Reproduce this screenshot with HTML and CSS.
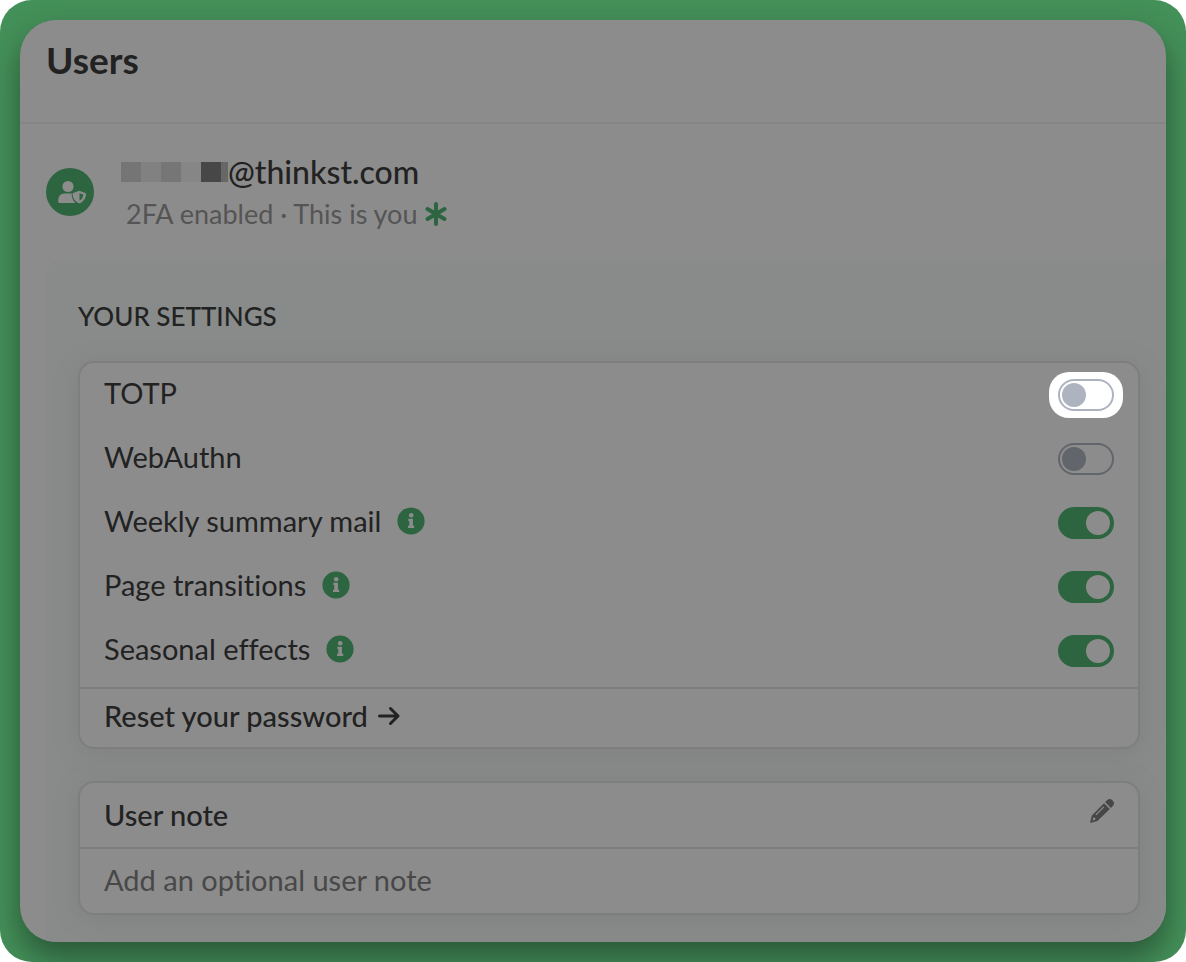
FILE: index.html
```html
<!DOCTYPE html>
<html lang="en">
<head>
<meta charset="utf-8">
<meta name="viewport" content="width=device-width, initial-scale=1">
<title>Users</title>
<link rel="stylesheet" href="styles.css">
</head>
<body>
<svg class="symbols" aria-hidden="true">
  <symbol id="info" viewBox="0 0 28 28">
    <circle cx="14" cy="14" r="13.6" fill="currentColor"/>
    <g class="cutout"><circle cx="14.200" cy="8.200" r="2.300"/><path d="M11.300 11.700h4.600v7h1.300v2.400h-6.200v-2.400h1.300v-4.600h-1z"/></g>
  </symbol>
</svg>
<div class="frame">
  <main class="window">
    <header class="topbar"><h1>Users</h1></header>
    <div class="content">
      <section class="profile">
        <svg class="avatar" viewBox="0 0 48 48" aria-hidden="true">
          <circle class="disc" cx="24" cy="24" r="24"/>
          <circle class="cutout" cx="22" cy="18.500" r="5.600"/>
          <path class="cutout" d="M12.200 33.500c0-5 2.300-7.900 6.200-7.900h7.400c-.4 3.700 1 6.800 3.500 9.400H13.500c-.8 0-1.300-.6-1.300-1.500z"/>
          <path class="cutout" d="M33.300 22.800l6 2.200c.5.200.7.600.7 1-.1 4-2.200 7.500-6 9.200-.5.200-.9.200-1.400 0-3.800-1.700-5.900-5.200-6-9.200 0-.4.200-.8.700-1z"/>
          <path class="disc" d="M33.500 25.200l3.800 1.400c-.2 2.700-1.500 4.900-3.800 6.200z"/>
        </svg>
        <div class="identity">
          <p class="email"><svg class="mosaic" viewBox="0 0 107 20" aria-hidden="true"><path fill="#757575" d="M0 0h20v20H0z"/><path fill="#818181" d="M20 0h20v20H20z"/><path fill="#767676" d="M40 0h20v20H40z"/><path fill="#868686" d="M60 0h20v20H60z"/><path fill="#474747" d="M80 0h20v20H80z"/><path fill="#676767" d="M100 0h7v20h-7z"/></svg>@thinkst.com</p>
          <p class="status">2FA enabled · This is you <svg class="star" viewBox="0 0 22 24" aria-hidden="true"><path d="M11 2v20M2.500 7l17 10M19.500 7l-17 10"/></svg></p>
        </div>
      </section>
      <section class="panel">
        <h2>YOUR SETTINGS</h2>
        <div class="card">
          <div class="rows">
            <div class="row"><label for="totp">TOTP</label><span class="spotlight"><input class="toggle" id="totp" type="checkbox"></span></div>
            <div class="row"><label for="webauthn">WebAuthn</label><input class="toggle" id="webauthn" type="checkbox"></div>
            <div class="row"><label for="weekly">Weekly summary mail</label><svg class="info"><use href="#info"/></svg><input class="toggle" id="weekly" type="checkbox" checked></div>
            <div class="row"><label for="transitions">Page transitions</label><svg class="info"><use href="#info"/></svg><input class="toggle" id="transitions" type="checkbox" checked></div>
            <div class="row"><label for="seasonal">Seasonal effects</label><svg class="info"><use href="#info"/></svg><input class="toggle" id="seasonal" type="checkbox" checked></div>
          </div>
          <a class="reset" href="#reset">Reset your password <svg class="arrow" viewBox="0 0 22 20" aria-hidden="true"><path d="M1.500 10h18M12.500 2.500l7.500 7.500-7.500 7.500"/></svg></a>
        </div>
        <div class="card">
          <div class="note-head"><label for="note">User note</label>
            <button class="edit" type="button" aria-label="Edit user note"><svg viewBox="0 0 24 24" aria-hidden="true"><path fill="currentColor" fill-rule="evenodd" d="M16.800 1.400a3.800 3.800 0 0 1 5.800 5.800l-1.700 1.700-5.800-5.800zM14 4.200l5.800 5.800L7.400 22.100l-6.200 1.700c-.7.200-1.200-.3-1-1l1.700-6.200zM13.400 7.400l-8 8 .9.900 8-8zM3.300 18.600l-.8 2.900 2.900-.8-.2-1.900z"/></svg></button>
          </div>
          <input class="note" id="note" type="text" placeholder="Add an optional user note">
        </div>
      </section>
    </div>
  </main>
</div>
</body>
</html>
```
FILE: styles.css
```css
* { box-sizing: border-box; }

body {
  margin: 0;
  background: #fff;
  color: #222;
  font: 500 29px/36px Lato, "Open Sans", sans-serif;
  font-variant-ligatures: none;
}

h1, h2, p { margin: 0; }
.symbols { position: absolute; width: 0; height: 0; }
.cutout { fill: #8c8c8c; }

.frame {
  display: flex;
  min-height: 100vh;
  padding: 20px;
  border-radius: 32px;
  background: #449059;
  overflow: hidden;
}

.window {
  flex: 1;
  display: flex;
  flex-direction: column;
  min-width: 0;
  border-radius: 36px;
  background: #8c8c8c;
  box-shadow: 0 16px 32px rgba(0, 0, 0, 0.4);
  overflow: hidden;
}

.topbar {
  height: 104px;
  padding: 18px 26px;
  border-bottom: 2px solid #858585;
}
h1 { font-size: 37px; line-height: 44px; font-weight: 700; }

.content {
  flex: 1;
  display: flex;
  flex-direction: column;
  padding-left: 26px;
}

.profile { display: flex; gap: 27px; padding: 28px 0; }
.avatar { width: 48px; height: 48px; margin-top: 16px; }
.disc { fill: #2d6540; }
.email { display: flex; align-items: center; font-size: 32px; line-height: 40px; }
.mosaic { width: 107px; height: 20px; }
.status {
  display: flex;
  align-items: center;
  gap: 8px;
  padding: 4px 0 0 5px;
  color: #555;
  font-size: 27px;
  font-weight: 400;
}
.star { width: 22px; height: 24px; fill: none; stroke: #2d6540; stroke-width: 4; stroke-linecap: round; }

.panel {
  flex: 1;
  display: flex;
  flex-direction: column;
  gap: 32px;
  padding: 38px 26px 27px 32px;
  border-top-left-radius: 16px;
  background: #888b89;
}
h2 { margin-bottom: -5px; font-size: 26px; font-weight: 500; }

.card {
  border: 2px solid #7e7e7e;
  border-radius: 16px;
  background: #8c8c8c;
  box-shadow: 0 4px 24px rgba(110, 108, 108, 0.3);
}
.rows { padding-bottom: 4px; font-weight: 400; }
.row { display: flex; align-items: center; height: 64px; padding: 0 24px; }
.row > :last-child { margin-left: auto; }
.row label, .info { margin-bottom: 4px; }
.info { width: 28px; height: 28px; margin-left: 16px; color: #2d6540; }

.spotlight {
  display: flex;
  margin-right: -9px;
  padding: 7px 9px;
  border-radius: 20px;
  background: #fff;
}
.spotlight .toggle { color: #adb4bf; }

.toggle {
  appearance: none;
  width: 56px;
  height: 32px;
  margin: 0;
  padding: 2px;
  border: 2px solid;
  border-radius: 16px;
  color: #62656b;
}
.toggle::before {
  content: "";
  display: block;
  width: 24px;
  height: 24px;
  border-radius: 50%;
  background: currentColor;
}
.toggle:checked { border-color: #2d6540; background: #2d6540; }
.toggle:checked::before { margin-left: auto; background: #8c8c8c; }

.reset {
  display: flex;
  align-items: center;
  gap: 10px;
  height: 60px;
  padding: 0 24px 4px;
  border-top: 2px solid #7e7e7e;
  color: inherit;
  text-decoration: none;
}
.arrow { width: 22px; height: 20px; fill: none; stroke: currentColor; stroke-width: 3; stroke-linecap: round; stroke-linejoin: round; }

.note-head {
  display: flex;
  align-items: center;
  justify-content: space-between;
  height: 66px;
  padding: 0 24px;
  border-bottom: 2px solid #7e7e7e;
}
.edit { width: 24px; height: 24px; margin-bottom: 8px; padding: 0; border: 0; background: none; color: #474747; }
.edit svg { display: block; }
.note {
  display: block;
  width: 100%;
  height: 64px;
  padding: 0 24px 4px;
  border: 0;
  border-radius: 0 0 14px 14px;
  background: none;
  color: inherit;
  font: inherit;
  font-weight: 400;
}
.note::placeholder { color: #484848; opacity: 1; }
```
